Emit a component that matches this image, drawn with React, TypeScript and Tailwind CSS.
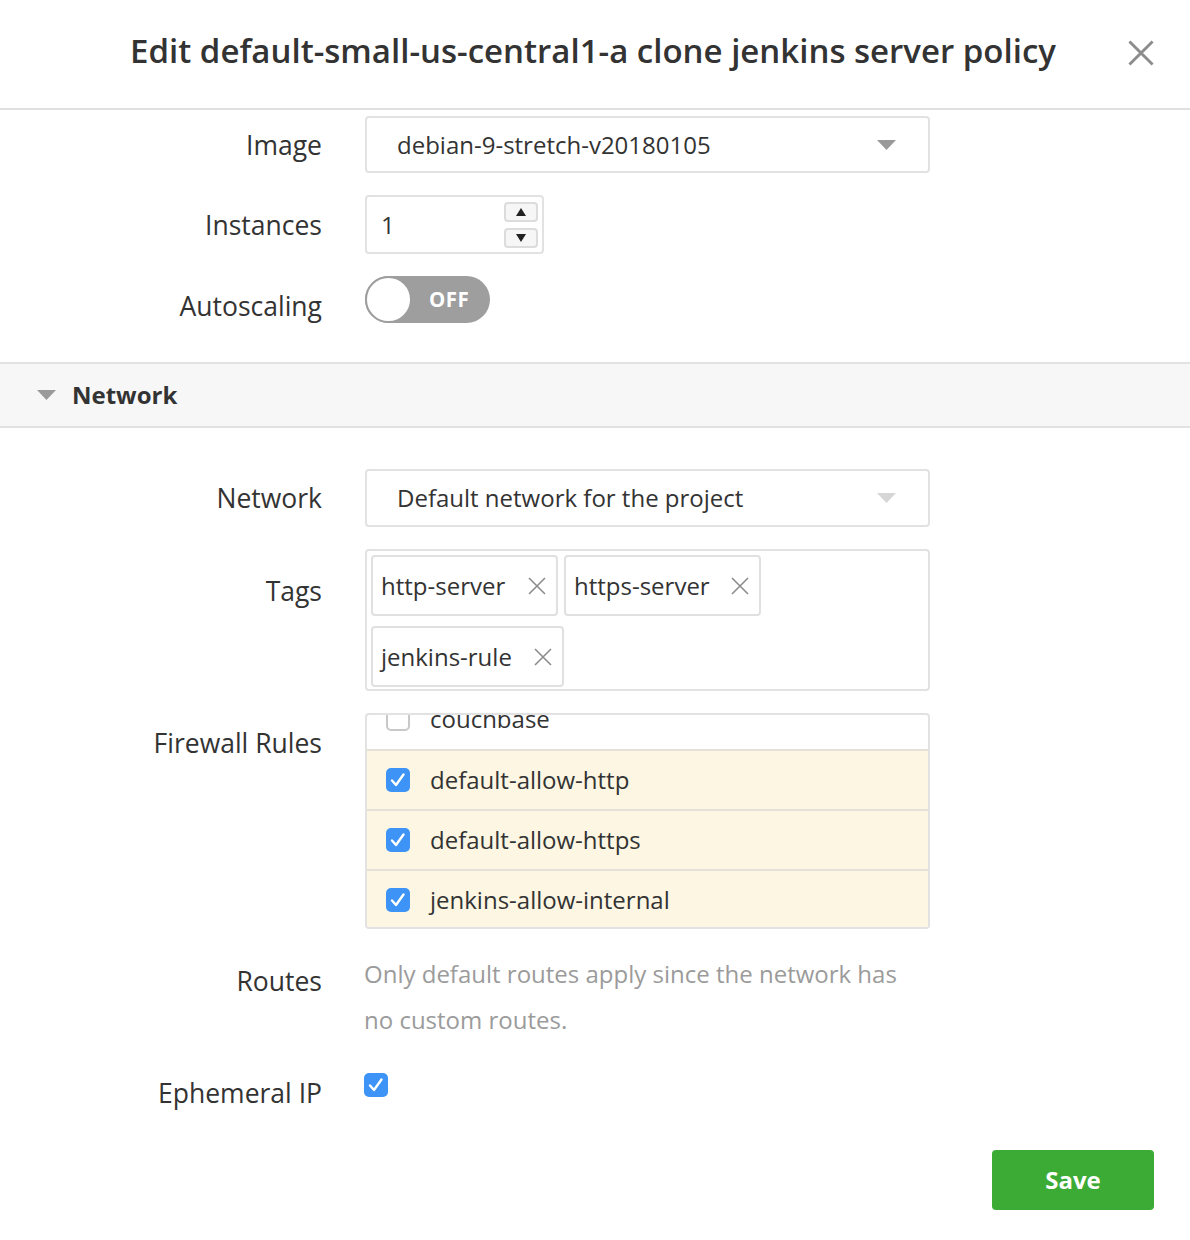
import React from "react";

const XIcon = ({ size = 18, color = "#8a8a8a", stroke = 2 }: { size?: number; color?: string; stroke?: number }) => (
  <svg width={size} height={size} viewBox="0 0 18 18" fill="none">
    <path d="M1 1L17 17M17 1L1 17" stroke={color} strokeWidth={stroke} />
  </svg>
);

const Caret = ({ color }: { color: string }) => (
  <svg width="19" height="10" viewBox="0 0 19 10">
    <path d="M0 0H19L9.5 10Z" fill={color} />
  </svg>
);

const Check = ({ className = "" }: { className?: string }) => (
  <span className={"block h-[24px] w-[24px] rounded-[5px] bg-[#3d94f6] " + className}>
    <svg width="24" height="24" viewBox="0 0 24 24" fill="none">
      <path d="M6 12.5L10 17L17.5 6.5" stroke="white" strokeWidth="2.4" strokeLinecap="round" strokeLinejoin="round" />
    </svg>
  </span>
);

const Label = ({ children, pt }: { children: React.ReactNode; pt: string }) => (
  <div className={"w-[322px] shrink-0 text-right text-[26.5px] leading-[36px] text-[#333] " + pt}>{children}</div>
);

export default function App() {
  return (
    <div className="relative min-h-[1240px] w-[1190px] bg-white text-[#333]" style={{ fontFamily: '"Open Sans", "Noto Sans", sans-serif' }}>
      {/* Header */}
      <div className="relative flex h-[110px] items-center justify-center border-b-2 border-[#e0e0e0]">
        <h1 className="mb-[6px] mr-[4px] text-[33px] font-semibold text-[#333]">
          Edit default-small-us-central1-a clone jenkins server policy
        </h1>
        <button className="absolute right-[36px] top-[40px]">
          <XIcon size={26} color="#8c8c8c" stroke={2} />
        </button>
      </div>

      {/* Basic rows */}
      <div className="flex flex-col gap-[22px] pt-[6px]">
        <div className="flex">
          <Label pt="pt-[11px]">Image</Label>
          <div className="ml-[43px] flex h-[57px] w-[565px] items-center justify-between rounded-[4px] border-2 border-[#e2e2e2] pl-[30px] pr-[32px] text-[24px] text-[#333]">
            <span>debian-9-stretch-v20180105</span>
            <Caret color="#999" />
          </div>
        </div>
        <div className="flex">
          <Label pt="pt-[12px]">Instances</Label>
          <div className="ml-[43px] flex h-[59px] w-[179px] items-center justify-between rounded-[4px] border-2 border-[#e2e2e2] pl-[14px] pr-[4px] text-[24px]">
            <span>1</span>
            <div className="flex flex-col gap-[6px]">
              <div className="flex h-[20px] w-[34px] items-center justify-center rounded-[4px] border-2 border-[#dcdcdc] bg-[#f6f6f6]">
                <svg width="10" height="8" viewBox="0 0 10 8"><path d="M0 8H10L5 0Z" fill="#222" /></svg>
              </div>
              <div className="flex h-[20px] w-[34px] items-center justify-center rounded-[4px] border-2 border-[#dcdcdc] bg-[#f6f6f6]">
                <svg width="10" height="8" viewBox="0 0 10 8"><path d="M0 0H10L5 8Z" fill="#222" /></svg>
              </div>
            </div>
          </div>
        </div>
        <div className="flex">
          <Label pt="pt-[12px]">Autoscaling</Label>
          <div className="relative ml-[43px] flex h-[47px] w-[125px] items-center rounded-full bg-[#9e9e9e]">
            <div className="h-[47px] w-[47px] rounded-full border-2 border-[#9e9e9e] bg-white" />
            <span className="ml-[17px] text-[20.5px] font-bold tracking-[0.5px] text-white">OFF</span>
          </div>
        </div>
      </div>

      {/* Network section header */}
      <div className="mt-[38px] flex h-[66px] items-center border-y-2 border-[#e2e2e2] bg-[#f7f7f7] pl-[37px]">
        <Caret color="#9a9a9a" />
        <span className="ml-[16px] text-[24px] font-bold text-[#333]">Network</span>
      </div>

      <div className="flex flex-col gap-[22px] pt-[41px]">
        <div className="flex">
          <Label pt="pt-[11px]">Network</Label>
          <div className="ml-[43px] flex h-[58px] w-[565px] items-center justify-between rounded-[4px] border-2 border-[#e2e2e2] pl-[30px] pr-[32px] text-[24px] text-[#333]">
            <span>Default network for the project</span>
            <Caret color="#d6d6d6" />
          </div>
        </div>

        <div className="flex">
          <Label pt="pt-[24px]">Tags</Label>
          <div className="ml-[43px] flex h-[142px] w-[565px] flex-wrap content-start gap-x-[6px] gap-y-[10px] rounded-[4px] border-2 border-[#e2e2e2] p-[4px]">
            {[
              ["http-server", "w-[187px]"],
              ["https-server", "w-[197px]"],
              ["jenkins-rule", "w-[193px]"],
            ].map(([t, w]) => (
              <div key={t} className={"flex h-[61px] items-center justify-between rounded-[4px] border-2 border-[#e0e0e0] pl-[8px] pr-[10px] text-[24px] text-[#333] " + w}>
                <span>{t}</span>
                <XIcon size={18} color="#8c8c8c" stroke={1.6} />
              </div>
            ))}
          </div>
        </div>

        <div className="flex">
          <Label pt="pt-[12px]">Firewall Rules</Label>
          <div className="ml-[43px] h-[216px] w-[565px] overflow-hidden rounded-[4px] border-2 border-[#e2e2e2]">
            <div className="-mt-[26px] flex flex-col">
              <div className="flex h-[60px] items-center pl-[19px] text-[24px] text-[#333]">
                <span className="h-[24px] w-[24px] rounded-[5px] border-2 border-[#c8c8c8] bg-white" />
                <span className="ml-[20px]">couchbase</span>
              </div>
              {["default-allow-http", "default-allow-https", "jenkins-allow-internal"].map((r) => (
                <div key={r} className="flex h-[60px] items-center border-t-2 border-[#e4e1d8] bg-[#fcf6e3] pl-[19px] text-[24px] text-[#333]">
                  <Check />
                  <span className="ml-[20px]">{r}</span>
                </div>
              ))}
            </div>
          </div>
        </div>

        <div className="flex">
          <Label pt="pt-[12px]">Routes</Label>
          <div className="ml-[42px] w-[560px] text-[24px] leading-[46px] text-[#9b9b9b]">
            Only default routes apply since the network has no custom routes.
          </div>
        </div>

        <div className="flex">
          <Label pt="pt-[10px]">Ephemeral IP</Label>
          <div className="ml-[42px] pt-[8px]">
            <Check />
          </div>
        </div>
      </div>

      <div className="mt-[39px] flex justify-end pr-[36px]">
        <button className="flex h-[60px] w-[162px] items-center justify-center rounded-[4px] bg-[#3cab35] text-[24px] font-bold text-white">
          Save
        </button>
      </div>
    </div>
  );
}
